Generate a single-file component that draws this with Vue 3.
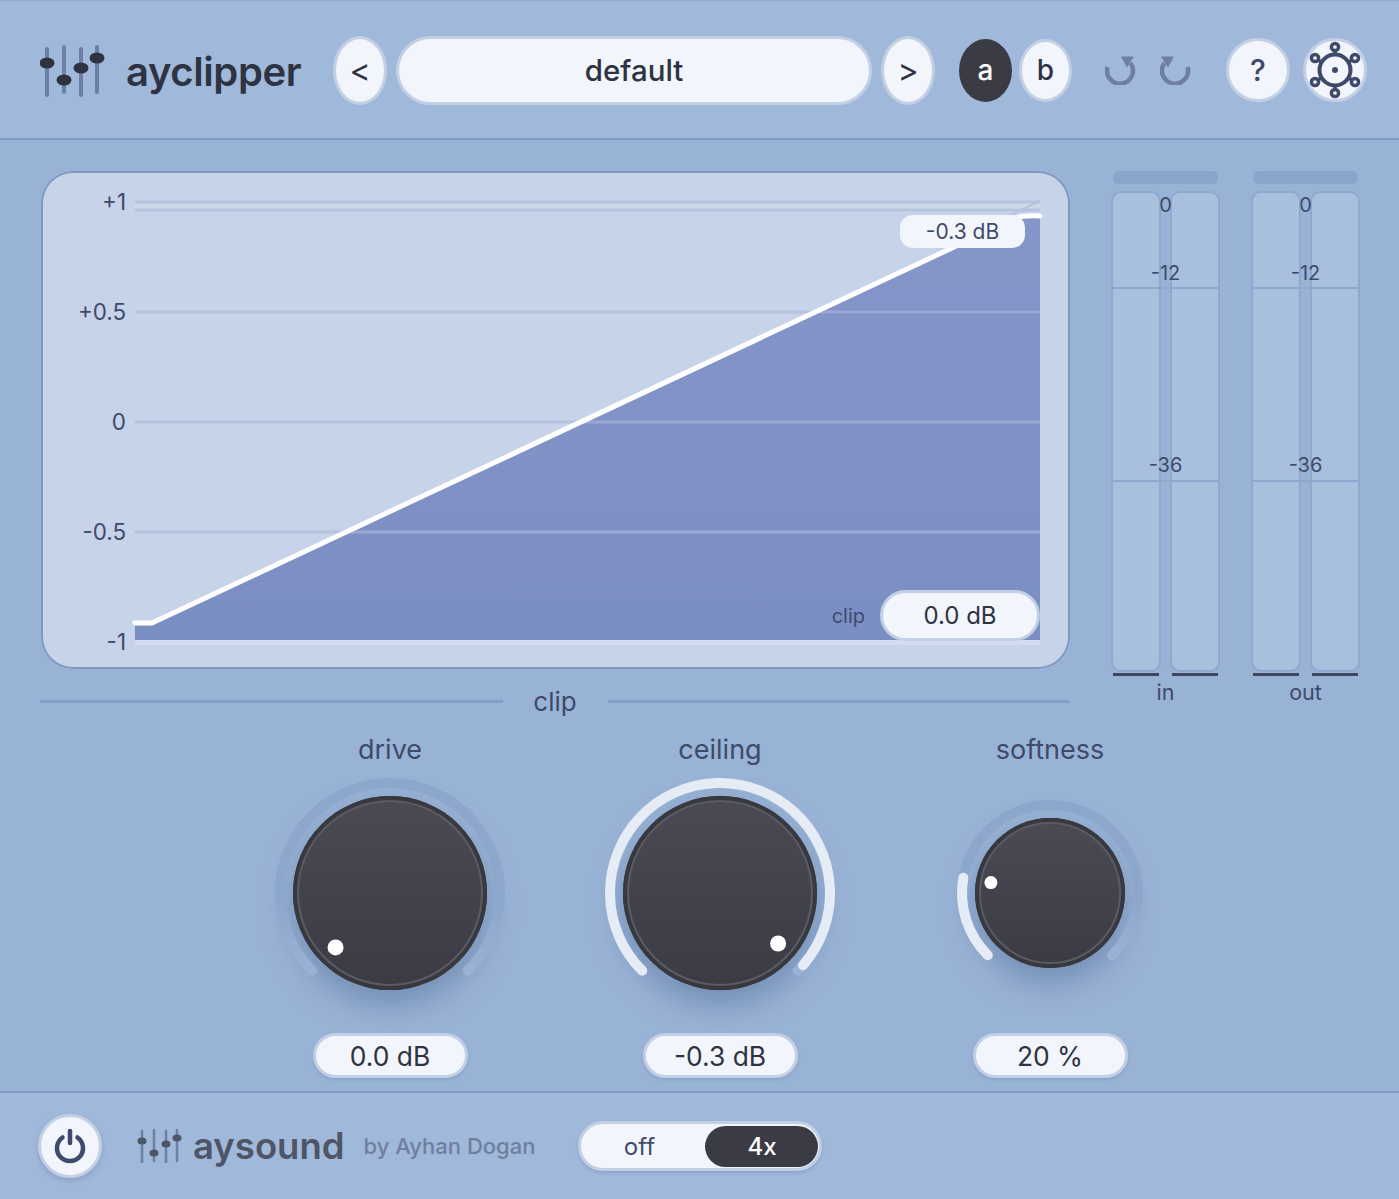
<template>
  <div class="plugin">
    <header class="topbar">
      <svg class="logo" width="66" height="60" viewBox="0 0 66 60">
        <g class="logo-bars">
          <line x1="7" y1="9" x2="7" y2="55" />
          <line x1="24" y1="7" x2="24" y2="52" />
          <line x1="41" y1="9" x2="41" y2="55" />
          <line x1="57" y1="7" x2="57" y2="52" />
        </g>
        <g fill="#2e3342">
          <ellipse cx="7" cy="23" rx="7.5" ry="5.5" />
          <ellipse cx="24" cy="40" rx="7.5" ry="5.5" />
          <ellipse cx="41" cy="28" rx="7.5" ry="5.5" />
          <ellipse cx="57" cy="18" rx="7.5" ry="5.5" />
        </g>
      </svg>
      <div class="title">ayclipper</div>

      <div class="preset">
        <button class="btn nav">&lt;</button>
        <button class="btn preset-name">default</button>
        <button class="btn nav">&gt;</button>
      </div>

      <div class="ab">
        <button class="btn ab-btn active">a</button>
        <button class="btn ab-btn">b</button>
      </div>

      <div class="history">
        <svg width="32" height="30" viewBox="0 0 32 30">
          <path class="hist-arc" d="M2.5 12 A13 13 0 1 0 25.5 8" />
          <path d="M16 1.5 H29 L22 12.5 Z" fill="#6e7fa3" />
        </svg>
        <svg width="32" height="30" viewBox="0 0 32 30">
          <path class="hist-arc" d="M27.5 12 A13 13 0 1 1 4.5 8" />
          <path d="M14 1.5 H1 L8 12.5 Z" fill="#6e7fa3" />
        </svg>
      </div>

      <button class="btn round help">?</button>
      <button class="btn round gear">
        <svg width="60" height="60" viewBox="0 0 60 60">
          <g fill="none" stroke="#3f4a6b">
            <circle cx="30" cy="30" r="15.5" stroke-width="4" />
            <circle cx="30" cy="7" r="3.6" stroke-width="3.5" />
            <circle cx="30" cy="53" r="3.6" stroke-width="3.5" />
            <circle cx="10" cy="18" r="3.6" stroke-width="3.5" />
            <circle cx="50" cy="18" r="3.6" stroke-width="3.5" />
            <circle cx="10" cy="42" r="3.6" stroke-width="3.5" />
            <circle cx="50" cy="42" r="3.6" stroke-width="3.5" />
            <path stroke-width="3.5" d="M30 10V15M30 45V50M13 20 17 22.5M47 20 43 22.5M13 40 17 37.5M47 40 43 37.5" />
          </g>
          <circle cx="30" cy="30" r="3" fill="#3f4a6b" />
        </svg>
      </button>
    </header>

    <main class="body">
      <div class="upper">
        <div class="plot-col">
          <div class="plot">
            <svg class="plot-svg" width="1029" height="498" viewBox="41 171 1029 498">
              <defs>
                <linearGradient id="area" x1="0" y1="0" x2="0" y2="1">
                  <stop offset="0" stop-color="#8596c9" />
                  <stop offset="1" stop-color="#7b8ec3" />
                </linearGradient>
                <clipPath id="under">
                  <path :d="areaPath" />
                </clipPath>
              </defs>
              <rect x="135" y="640" width="905" height="5" fill="#d3dcee" />
              <rect x="135" y="202" width="905" height="8" fill="#cdd8eb" />
              <g stroke="#b6c3de" stroke-width="3">
                <line x1="135" y1="202" x2="1040" y2="202" />
                <line x1="135" y1="210" x2="1040" y2="210" />
                <line v-for="y in [312, 422, 532]" :key="y" x1="135" :y1="y" x2="1040" :y2="y" />
              </g>
              <path :d="areaPath" fill="url(#area)" />
              <g clip-path="url(#under)" stroke="#9aa8d6" stroke-width="3">
                <line v-for="y in [312, 422, 532]" :key="y" x1="135" :y1="y" x2="1040" :y2="y" />
              </g>
              <line x1="940" y1="248" x2="1040" y2="201" stroke="#b6c3de" stroke-width="2" />
              <path :d="curve" fill="none" stroke="#fff" stroke-width="5" stroke-linejoin="round" stroke-linecap="round" />
              <text v-for="t in axis" :key="t.label" class="axis" x="126" :y="t.y" text-anchor="end">{{ t.label }}</text>
            </svg>
            <div class="ceil-tag">-0.3 dB</div>
            <div class="clip-read">
              <span class="clip-label">clip</span>
              <div class="pill clip-pill">0.0 dB</div>
            </div>
          </div>
          <div class="section">
            <span class="rule"></span>
            <span class="section-name">clip</span>
            <span class="rule"></span>
          </div>
        </div>

        <div class="meters">
          <div v-for="m in ['in', 'out']" :key="m" class="meter">
            <div class="slab"></div>
            <div class="channels">
              <div v-for="c in 2" :key="c" class="channel">
                <div class="channel-box"></div>
                <div class="floor"></div>
              </div>
              <span v-for="t in ticks" :key="t.label" class="tick-text" :style="{ top: t.text + 'px' }">{{ t.label }}</span>
              <span v-for="t in ticks.slice(1)" :key="t.label + 'l'" class="tick-line" :style="{ top: t.line + 'px' }"></span>
            </div>
            <div class="meter-name">{{ m }}</div>
          </div>
        </div>
      </div>

      <div class="knobs">
        <div v-for="k in knobs" :key="k.name" class="knob">
          <div class="knob-name">{{ k.name }}</div>
          <svg width="240" height="240" viewBox="-120 -120 240 240">
            <defs>
              <linearGradient :id="'face-' + k.name" x1="0" y1="0" x2="0" y2="1">
                <stop offset="0" stop-color="#4a4a55" />
                <stop offset="1" stop-color="#3b3b45" />
              </linearGradient>
              <linearGradient :id="'fade-' + k.name" gradientUnits="userSpaceOnUse" x1="0" :y1="-k.track" x2="0" :y2="k.track * 0.75">
                <stop offset="0" stop-color="#8da6cb" />
                <stop offset="0.6" stop-color="#8da6cb" />
                <stop offset="1" stop-color="#99b3d6" />
              </linearGradient>
            </defs>
            <circle class="face-shadow" :r="k.r" fill="#38383f" />
            <path class="track" :d="arc(k.track, -135, 135)" :stroke="'url(#fade-' + k.name + ')'" />
            <path v-if="k.angle > -130" class="active" :d="arc(k.track, -135, k.angle)" />
            <circle :r="k.r" fill="#38383f" />
            <circle :r="k.r - 5" :fill="'url(#face-' + k.name + ')'" stroke="#5b5b64" stroke-width="2" />
            <circle :cx="point(k.dot, k.angle).x" :cy="point(k.dot, k.angle).y" :r="k.dotR" fill="#fff" />
          </svg>
          <div class="pill value">{{ k.value }}</div>
        </div>
      </div>
    </main>

    <footer class="footer">
      <button class="btn power">
        <svg width="36" height="36" viewBox="0 0 36 36" fill="none" stroke="#3f4a6b" stroke-width="4.5" stroke-linecap="round">
          <path d="M10.5 9.5 A13 13 0 1 0 25.5 9.5" />
          <line x1="18" y1="3" x2="18" y2="15" />
        </svg>
      </button>
      <svg class="logo-small" width="46" height="36" viewBox="0 0 46 36">
        <g stroke="#6f7fa3" stroke-width="2.5" stroke-linecap="round">
          <line x1="5" y1="3" x2="5" y2="34" />
          <line x1="17" y1="2" x2="17" y2="33" />
          <line x1="29" y1="3" x2="29" y2="34" />
          <line x1="40" y1="2" x2="40" y2="33" />
        </g>
        <g fill="#4d5566">
          <ellipse cx="5" cy="13" rx="4.5" ry="3.6" />
          <ellipse cx="17" cy="25" rx="4.5" ry="3.6" />
          <ellipse cx="29" cy="16" rx="4.5" ry="3.6" />
          <ellipse cx="40" cy="10" rx="4.5" ry="3.6" />
        </g>
      </svg>
      <span class="brand">aysound</span>
      <span class="byline">by Ayhan Dogan</span>
      <div class="oversample">
        <span class="os-opt">off</span>
        <span class="os-opt on">4x</span>
      </div>
    </footer>
  </div>
</template>

<script setup>
const axis = [
  { label: '+1', y: 210 },
  { label: '+0.5', y: 320 },
  { label: '0', y: 430 },
  { label: '-0.5', y: 540 },
  { label: '-1', y: 650 },
]

const ticks = [
  { label: '0', text: 1, line: 0 },
  { label: '-12', text: 69, line: 96 },
  { label: '-36', text: 261, line: 289 },
]

const knobs = [
  { name: 'drive', value: '0.0 dB', r: 97, track: 110, dot: 77, dotR: 8, angle: -135 },
  { name: 'ceiling', value: '-0.3 dB', r: 97, track: 110, dot: 77, dotR: 8, angle: 131 },
  { name: 'softness', value: '20 %', r: 75, track: 88, dot: 60, dotR: 6.5, angle: -80 },
]

const curve = 'M135 623 L152 623 L1016 218 Q1024 215 1040 216'
const areaPath = curve + ' L1040 640 L135 640 Z'

const point = (r, deg) => {
  const a = (deg * Math.PI) / 180
  return { x: +(r * Math.sin(a)).toFixed(2), y: +(-r * Math.cos(a)).toFixed(2) }
}

const arc = (r, from, to) => {
  const s = point(r, from)
  const e = point(r, to)
  const large = to - from > 180 ? 1 : 0
  return `M${s.x} ${s.y} A${r} ${r} 0 ${large} 1 ${e.x} ${e.y}`
}
</script>

<style>
html,
body {
  margin: 0;
  background: #99b3d6;
}
</style>

<style scoped>
.plugin {
  width: 1399px;
  height: 1199px;
  display: flex;
  flex-direction: column;
  background: #99b3d6;
  font-family: Inter, 'Liberation Sans', sans-serif;
  color: #3f4a6b;
  overflow: hidden;
}
.btn {
  font-family: inherit;
  padding: 0;
  background: #f2f5fb;
  border: 3px solid #c3cfe5;
  color: #2e3342;
  box-sizing: border-box;
  display: flex;
  align-items: center;
  justify-content: center;
}

/* top bar */
.topbar {
  height: 140px;
  flex: none;
  box-sizing: border-box;
  display: flex;
  align-items: center;
  padding: 1px 0 0 40px;
  background: #a0b8da;
  border-top: 1px solid #8faacf;
  border-bottom: 2px solid #7f9ac2;
}
.logo-bars line,
.logo-small line {
  stroke-linecap: round;
}
.logo-bars line {
  stroke: #6f7fa3;
  stroke-width: 4;
}
.title {
  margin: 4px 0 0 20px;
  width: 207px;
  font-size: 40px;
  font-weight: 600;
  letter-spacing: -0.4px;
  color: #2e3342;
  line-height: 1;
}
.preset {
  display: flex;
  gap: 9px;
}
.nav {
  width: 54px;
  height: 69px;
  border-radius: 50%;
  font-size: 32px;
}
.preset-name {
  width: 476px;
  height: 69px;
  border-radius: 35px;
  font-size: 29.5px;
  font-weight: 500;
}
.ab {
  display: flex;
  gap: 7px;
  margin-left: 24px;
}
.ab-btn {
  width: 53px;
  height: 63px;
  border-radius: 50%;
  font-size: 28px;
  font-weight: 500;
}
.ab-btn.active {
  background: #3b3b46;
  border-color: #3b3b46;
  color: #fff;
}
.history {
  display: flex;
  gap: 23px;
  margin-left: 33px;
  width: 121px;
}
.hist-arc {
  fill: none;
  stroke: #6e7fa3;
  stroke-width: 4.5;
}
.round {
  width: 64px;
  height: 64px;
  border-radius: 50%;
}
.help {
  font-size: 30px;
  font-weight: 500;
  color: #3f4a6b;
}
.gear {
  margin-left: 13px;
}
.gear svg {
  display: block;
  flex: none;
}

/* body */
.body {
  flex: 1;
  padding: 31px 0 0 40px;
}
.upper {
  display: flex;
}
.plot-col {
  width: 1030px;
  flex: none;
}
.plot {
  position: relative;
  width: 1029px;
  height: 498px;
  margin-left: 1px;
  border-radius: 32px;
  background: #c7d3e8;
  box-shadow: inset 0 0 0 2px #7f9ac2;
}
.plot-svg {
  display: block;
}
.axis {
  font-size: 22.4px;
  fill: #3f4a6b;
}
.ceil-tag {
  position: absolute;
  left: 859px;
  top: 44px;
  width: 125px;
  height: 33px;
  border-radius: 13px;
  background: #f2f5fb;
  font-size: 21px;
  display: flex;
  align-items: center;
  justify-content: center;
}
.clip-read {
  position: absolute;
  right: 30px;
  top: 419px;
  display: flex;
  align-items: center;
  gap: 15px;
}
.clip-label {
  font-size: 20px;
  color: #3f4a6b;
}
.pill {
  background: #f2f5fb;
  border: 3px solid #c3cfe5;
  box-sizing: border-box;
  color: #2e3342;
  display: flex;
  align-items: center;
  justify-content: center;
}
.clip-pill {
  width: 160px;
  height: 51px;
  border-radius: 26px;
  font-size: 24px;
}
.section {
  display: flex;
  align-items: center;
  margin-top: 17px;
  height: 30px;
}
.rule {
  flex: 1;
  height: 3px;
  background: #83a0c6;
}
.section-name {
  width: 105px;
  text-align: center;
  font-size: 26px;
  color: #3f4a6b;
}

/* meters */
.meters {
  display: flex;
  gap: 31px;
  margin-left: 41px;
}
.meter {
  width: 109px;
}
.slab {
  height: 13px;
  margin: 0 2px;
  border-radius: 6px;
  background: #8aa5c9;
}
.channels {
  position: relative;
  display: flex;
  justify-content: space-between;
  margin-top: 7px;
}
.channel {
  width: 50px;
}
.channel-box {
  height: 481px;
  box-sizing: border-box;
  border: 2px solid #8ea9cd;
  border-radius: 10px;
  background: #a9bfde;
}
.floor {
  height: 3px;
  margin: 1px 2px 0;
  background: #3e4660;
}
.tick-text {
  position: absolute;
  left: 0;
  right: 0;
  text-align: center;
  font-size: 20px;
  line-height: 26px;
  color: #3f4a6b;
}
.tick-line {
  position: absolute;
  left: 0;
  right: 0;
  height: 2px;
  background: #8ea9cd;
}
.meter-name {
  margin-top: 4px;
  text-align: center;
  font-size: 21.5px;
  line-height: 24px;
}

/* knobs */
.knobs {
  display: grid;
  grid-template-columns: repeat(3, 330px);
  margin: 19px 0 0 185px;
}
.knob {
  display: flex;
  flex-direction: column;
  align-items: center;
}
.knob svg {
  display: block;
  margin-top: 8px;
  overflow: visible;
}
.knob-name {
  font-size: 27px;
  line-height: 30px;
  color: #3f4a6b;
}
.track,
.active {
  fill: none;
  stroke-width: 10;
  stroke-linecap: round;
}
.active {
  stroke: #e6ecf6;
}
.face-shadow {
  filter: drop-shadow(0 14px 16px rgba(62, 86, 130, 0.42));
}
.value {
  width: 155px;
  height: 45px;
  margin-top: 20px;
  border-radius: 23px;
  font-size: 26.4px;
  box-shadow: 0 2px 3px rgba(90, 115, 160, 0.25);
}

/* footer */
.footer {
  height: 108px;
  flex: none;
  box-sizing: border-box;
  display: flex;
  align-items: center;
  padding-left: 38px;
  background: #a0b8da;
  border-top: 2px solid #7f9ac2;
}
.power {
  width: 64px;
  height: 64px;
  border-radius: 50%;
  box-shadow: 0 3px 5px rgba(90, 115, 160, 0.3);
}
.logo-small {
  margin-left: 35px;
}
.brand {
  margin-left: 10px;
  font-size: 36.5px;
  font-weight: 600;
  color: #4d5566;
}
.byline {
  margin-left: 19px;
  font-size: 22px;
  font-weight: 500;
  color: #6f7f9f;
}
.oversample {
  margin-left: 43px;
  width: 244px;
  height: 50px;
  box-sizing: border-box;
  padding: 0 1px 0 0;
  display: flex;
  align-items: center;
  border-radius: 25px;
  background: #f2f5fb;
  border: 3px solid #c3cfe5;
  box-shadow: 0 2px 3px rgba(90, 115, 160, 0.3);
}
.os-opt {
  flex: 1;
  padding-right: 8px;
  text-align: center;
  font-size: 24px;
}
.os-opt.on {
  flex: none;
  padding: 0;
  width: 113px;
  height: 41px;
  line-height: 41px;
  border-radius: 21px;
  background: #3b3b46;
  color: #fff;
  font-weight: 500;
}
</style>
